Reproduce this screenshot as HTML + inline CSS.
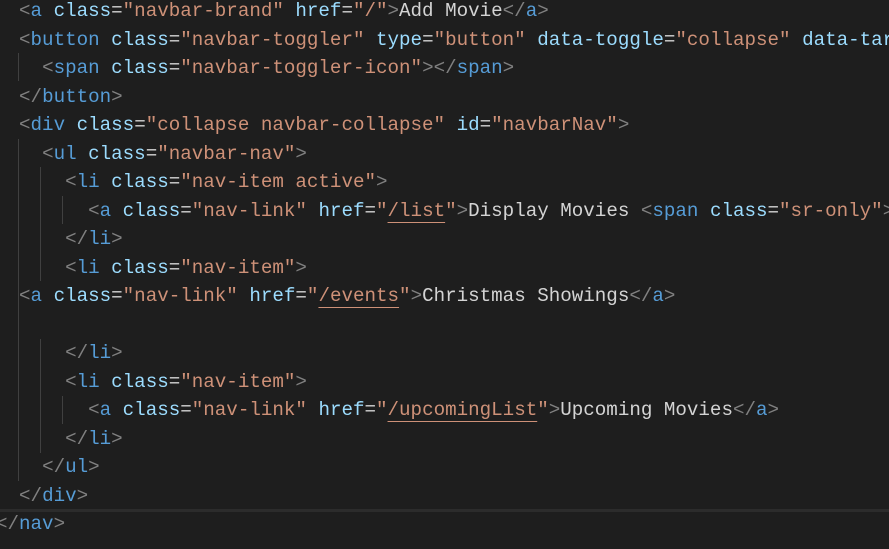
<!DOCTYPE html>
<html><head><style>
body{margin:0;width:889px;height:535px;background:#1e1e1e;overflow:hidden;position:relative;font-family:"Liberation Mono",monospace;font-size:19.2px}
.l{position:absolute;left:-4px;height:28.5px;line-height:28.5px;white-space:pre;color:#d4d4d4}
.p{color:#808080}.t{color:#569cd6}.a{color:#9cdcfe}.s{color:#ce9178}
.u{text-decoration:underline;text-decoration-color:#ce9178;text-underline-offset:6px}
.g{position:absolute;width:1px;background:#404040}
.cur{position:absolute;left:0;top:509px;width:889px;height:40px;border-top:3px solid #2c2c2c;box-sizing:border-box}
</style></head><body>
<div class="cur"></div>
<div class="g" style="left:18px;top:53px;height:28px"></div>
<div class="g" style="left:18px;top:139px;height:342px"></div>
<div class="g" style="left:40px;top:167px;height:114px"></div>
<div class="g" style="left:40px;top:339px;height:114px"></div>
<div class="g" style="left:62px;top:196px;height:28px"></div>
<div class="g" style="left:62px;top:396px;height:28px"></div>
<div class="l" style="top:-3px">  <span class="p">&lt;</span><span class="t">a</span> <span class="a">class</span>=<span class="s">"navbar-brand"</span> <span class="a">href</span>=<span class="s">"/"</span><span class="p">&gt;</span>Add Movie<span class="p">&lt;/</span><span class="t">a</span><span class="p">&gt;</span></div>
<div class="l" style="top:25.5px">  <span class="p">&lt;</span><span class="t">button</span> <span class="a">class</span>=<span class="s">"navbar-toggler"</span> <span class="a">type</span>=<span class="s">"button"</span> <span class="a">data-toggle</span>=<span class="s">"collapse"</span> <span class="a">data-target</span></div>
<div class="l" style="top:54px">    <span class="p">&lt;</span><span class="t">span</span> <span class="a">class</span>=<span class="s">"navbar-toggler-icon"</span><span class="p">&gt;&lt;/</span><span class="t">span</span><span class="p">&gt;</span></div>
<div class="l" style="top:82.5px">  <span class="p">&lt;/</span><span class="t">button</span><span class="p">&gt;</span></div>
<div class="l" style="top:111px">  <span class="p">&lt;</span><span class="t">div</span> <span class="a">class</span>=<span class="s">"collapse navbar-collapse"</span> <span class="a">id</span>=<span class="s">"navbarNav"</span><span class="p">&gt;</span></div>
<div class="l" style="top:139.5px">    <span class="p">&lt;</span><span class="t">ul</span> <span class="a">class</span>=<span class="s">"navbar-nav"</span><span class="p">&gt;</span></div>
<div class="l" style="top:168px">      <span class="p">&lt;</span><span class="t">li</span> <span class="a">class</span>=<span class="s">"nav-item active"</span><span class="p">&gt;</span></div>
<div class="l" style="top:196.5px">        <span class="p">&lt;</span><span class="t">a</span> <span class="a">class</span>=<span class="s">"nav-link"</span> <span class="a">href</span>=<span class="s">"<span class="u">/list</span>"</span><span class="p">&gt;</span>Display Movies <span class="p">&lt;</span><span class="t">span</span> <span class="a">class</span>=<span class="s">"sr-only"</span><span class="p">&gt;</span></div>
<div class="l" style="top:225px">      <span class="p">&lt;/</span><span class="t">li</span><span class="p">&gt;</span></div>
<div class="l" style="top:253.5px">      <span class="p">&lt;</span><span class="t">li</span> <span class="a">class</span>=<span class="s">"nav-item"</span><span class="p">&gt;</span></div>
<div class="l" style="top:282px">  <span class="p">&lt;</span><span class="t">a</span> <span class="a">class</span>=<span class="s">"nav-link"</span> <span class="a">href</span>=<span class="s">"<span class="u">/events</span>"</span><span class="p">&gt;</span>Christmas Showings<span class="p">&lt;/</span><span class="t">a</span><span class="p">&gt;</span></div>
<div class="l" style="top:339px">      <span class="p">&lt;/</span><span class="t">li</span><span class="p">&gt;</span></div>
<div class="l" style="top:367.5px">      <span class="p">&lt;</span><span class="t">li</span> <span class="a">class</span>=<span class="s">"nav-item"</span><span class="p">&gt;</span></div>
<div class="l" style="top:396px">        <span class="p">&lt;</span><span class="t">a</span> <span class="a">class</span>=<span class="s">"nav-link"</span> <span class="a">href</span>=<span class="s">"<span class="u">/upcomingList</span>"</span><span class="p">&gt;</span>Upcoming Movies<span class="p">&lt;/</span><span class="t">a</span><span class="p">&gt;</span></div>
<div class="l" style="top:424.5px">      <span class="p">&lt;/</span><span class="t">li</span><span class="p">&gt;</span></div>
<div class="l" style="top:453px">    <span class="p">&lt;/</span><span class="t">ul</span><span class="p">&gt;</span></div>
<div class="l" style="top:481.5px">  <span class="p">&lt;/</span><span class="t">div</span><span class="p">&gt;</span></div>
<div class="l" style="top:510px"><span class="p">&lt;/</span><span class="t">nav</span><span class="p">&gt;</span></div>
</body></html>
